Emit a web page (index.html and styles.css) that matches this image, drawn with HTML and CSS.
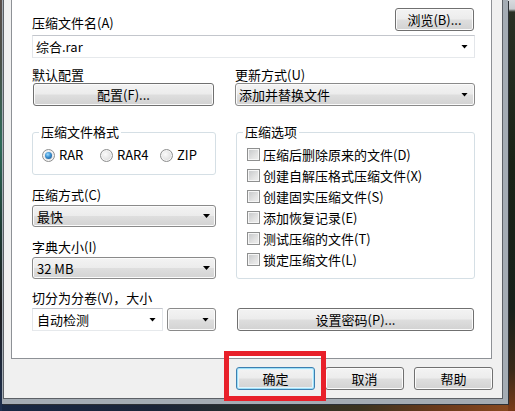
FILE: index.html
```html
<!DOCTYPE html>
<html lang="zh-CN">
<head>
<meta charset="utf-8">
<title>压缩文件名和参数</title>
<link rel="stylesheet" href="styles.css">
</head>
<body>
<div class="desktop">
  <div class="window">
    <div class="client">
      <div class="panel">
        <div class="row-top">
          <span class="label">压缩文件名(A)</span>
          <button class="btn browse">浏览(B)...</button>
        </div>
        <div class="combo edit name"><span>综合.rar</span><i class="arrow"></i></div>
        <div class="cols">
          <div class="col col-left">
            <span class="label first">默认配置</span>
            <button class="btn profile">配置(F)...</button>
            <fieldset class="group fmt">
              <legend>压缩文件格式</legend>
              <div class="radios">
                <span class="radio-item r1"><span class="radio on"></span>RAR</span>
                <span class="radio-item r2"><span class="radio"></span>RAR4</span>
                <span class="radio-item"><span class="radio"></span>ZIP</span>
              </div>
            </fieldset>
            <span class="label l-method">压缩方式(C)</span>
            <div class="combo drop small"><span>最快</span><i class="arrow"></i></div>
            <span class="label l-dict">字典大小(I)</span>
            <div class="combo drop small"><span>32 MB</span><i class="arrow"></i></div>
            <span class="label l-split">切分为分卷(V)，大小</span>
            <div class="split">
              <div class="combo edit vol"><span>自动检测</span><i class="arrow"></i></div>
              <div class="combo drop unit"><span></span><i class="arrow"></i></div>
            </div>
          </div>
          <div class="col col-right">
            <span class="label first">更新方式(U)</span>
            <div class="combo drop update"><span>添加并替换文件</span><i class="arrow"></i></div>
            <fieldset class="group opts">
              <legend>压缩选项</legend>
              <span class="check"><span class="box"></span>压缩后删除原来的文件(D)</span>
              <span class="check"><span class="box"></span>创建自解压格式压缩文件(X)</span>
              <span class="check"><span class="box"></span>创建固实压缩文件(S)</span>
              <span class="check"><span class="box"></span>添加恢复记录(E)</span>
              <span class="check"><span class="box"></span>测试压缩的文件(T)</span>
              <span class="check"><span class="box"></span>锁定压缩文件(L)</span>
            </fieldset>
            <button class="btn pwd">设置密码(P)...</button>
          </div>
        </div>
      </div>
      <div class="actions">
        <button class="btn action default">确定</button>
        <button class="btn action">取消</button>
        <button class="btn action">帮助</button>
      </div>
    </div>
  </div>
  <div class="highlight"></div>
</div>
</body>
</html>
```

FILE: styles.css
```css
* { box-sizing: border-box; }

body {
  margin: 0;
  width: 515px;
  height: 411px;
  overflow: hidden;
  font-family: "Noto Sans CJK SC", sans-serif;
  font-size: 13px;
  color: #000;
}

.desktop {
  position: relative;
  height: 411px;
  padding: 0 7px 7px 2px;
  background:
    linear-gradient(#d8dade 0, #c8ccd0 9px, #2a3024 12px, #1a2216 40%, #17201a 75%, #3a2818 90%, #7a3a18 100%) right top / 7px 100% no-repeat,
    linear-gradient(#5a4e4a 0%, #4a5048 15%, #2e6a58 35%, #1e3c34 55%, #1c1c1e 75%, #1e3050 100%) left top / 2px 100% no-repeat,
    linear-gradient(to right, #182844 0%, #1a2438 30%, #28302c 50%, #3c3420 70%, #6a3a1c 85%, #8a4a20 100%);
}

.window {
  height: 100%;
  border-style: solid;
  border-color: #a4acb4;
  border-width: 0 5px 5px 1px;
  box-shadow: 1px 1px 0 #2c3036;
}

.client {
  height: 100%;
  background: #f0f0f0;
  border-style: solid;
  border-color: #5c6066;
  border-width: 0 1px 1px 1px;
  padding: 0 10px 0 7px;
  display: flex;
  flex-direction: column;
}

.panel {
  height: 359px;
  background: #fff;
  border: 1px solid #8e9196;
  border-top: none;
  padding: 8px 16px 0 20px;
  display: flex;
  flex-direction: column;
}

.label {
  display: block;
  line-height: 15px;
  white-space: nowrap;
}

.row-top {
  display: flex;
  justify-content: space-between;
  align-items: flex-end;
}

.row-top .label { margin-bottom: 1px; }

/* buttons */
.btn {
  font-family: inherit;
  font-size: 13px;
  color: #000;
  height: 23px;
  padding: 0;
  border: 1px solid #707070;
  border-radius: 3px;
  background: linear-gradient(#f3f3f3 0%, #ececec 48%, #dedede 52%, #d2d2d2 100%);
  box-shadow: inset 0 0 0 1px #fbfbfb;
  display: flex;
  align-items: center;
  justify-content: center;
  line-height: 15px;
}

.browse { width: 79px; margin-right: 1px; }
.profile { width: 181px; margin: 1px 0 0 1px; }
.pwd { width: 237px; margin: 29px 0 0 2px; }

.action { width: 79px; }
.default {
  border-color: #3c7fb1;
  box-shadow: inset 0 0 0 1px #9ee0f8, inset 0 0 0 2px #e4f4fc;
}

/* combos */
.combo {
  height: 23px;
  display: flex;
  align-items: center;
  justify-content: space-between;
  padding: 0 6px 0 3px;
  line-height: 15px;
  white-space: nowrap;
}

.combo.edit {
  background: #fff;
  border: 1px solid;
  border-color: #c3c6cc #e3e6ea #e6e9ec #e3e6ea;
}

.combo.drop {
  border: 1px solid #8a8a8a;
  border-radius: 3px;
  background: linear-gradient(#f3f3f3 0%, #ececec 48%, #dedede 52%, #d3d3d3 100%);
  box-shadow: inset 0 0 0 1px #fbfbfb;
}

.arrow {
  display: block;
  width: 7px;
  height: 4px;
  background: #000;
  clip-path: polygon(0 0, 100% 0, 50% 100%);
}

.name { margin-top: 4px; }

.cols {
  display: flex;
  gap: 19px;
}

.col {
  display: flex;
  flex-direction: column;
}

.col-left { width: 184px; }
.col-right { width: 240px; }

.label.first { margin-top: 9px; }

.update { margin-top: 1px; }

/* group boxes */
.group {
  margin: 19px 0 0 0;
  border: 1px solid #d5dfe5;
  border-radius: 3px;
  min-width: 0;
}

.group legend {
  padding: 0 2px;
  line-height: 14px;
}

.fmt {
  padding: 9px 0 12px 9px;
}
.fmt legend { margin-left: -3px; }

.radios {
  display: flex;
  height: 14px;
  align-items: center;
}

.radio-item {
  display: flex;
  align-items: center;
  gap: 4px;
  line-height: 14px;
}
.r1 { width: 58px; }
.r2 { width: 60px; }

.radio {
  position: relative;
  width: 13px;
  height: 13px;
  border-radius: 50%;
  border: 1px solid #8e8f8f;
  background: radial-gradient(circle at 40% 40%, #fbfbfb 0%, #e6e6e6 50%, #c9c9c9 100%);
  box-shadow: inset 0 0 0 1px #f6f6f6;
}

.radio.on::after {
  content: "";
  position: absolute;
  left: 2px;
  top: 2px;
  width: 7px;
  height: 7px;
  border-radius: 50%;
  background: radial-gradient(circle at 40% 35%, #9edcff 0%, #3a8fd0 45%, #14497c 100%);
}

.opts {
  margin-left: 1px;
  padding: 5px 0 8px 10px;
}
.opts legend { margin-left: -4px; }

.check {
  display: flex;
  align-items: center;
  height: 21px;
  white-space: nowrap;
}

.box {
  width: 13px;
  height: 13px;
  margin-right: 3px;
  flex: none;
  border: 1px solid #8e8f8f;
  background: linear-gradient(135deg, #c4c6c8 0%, #e2e2e2 60%, #f0f0f0 100%);
  box-shadow: inset 0 0 0 1px #f6f6f6;
}

.l-method { margin-top: 12px; }
.small { height: 22px; margin-top: 3px; padding-left: 4px; padding-right: 5px; }
.l-dict { margin-top: 12px; }
.l-split { margin-top: 11px; }

.split {
  display: flex;
  gap: 4px;
  margin-top: 3px;
}

.vol { width: 131px; padding-left: 4px; }
.unit { width: 49px; padding-right: 6px; }

.actions {
  margin-top: 8px;
  margin-right: -1px;
  display: flex;
  justify-content: flex-end;
  gap: 10px;
}

.highlight {
  position: absolute;
  left: 224px;
  top: 351px;
  width: 102px;
  height: 50px;
  border: 5px solid #e8202a;
}
```
